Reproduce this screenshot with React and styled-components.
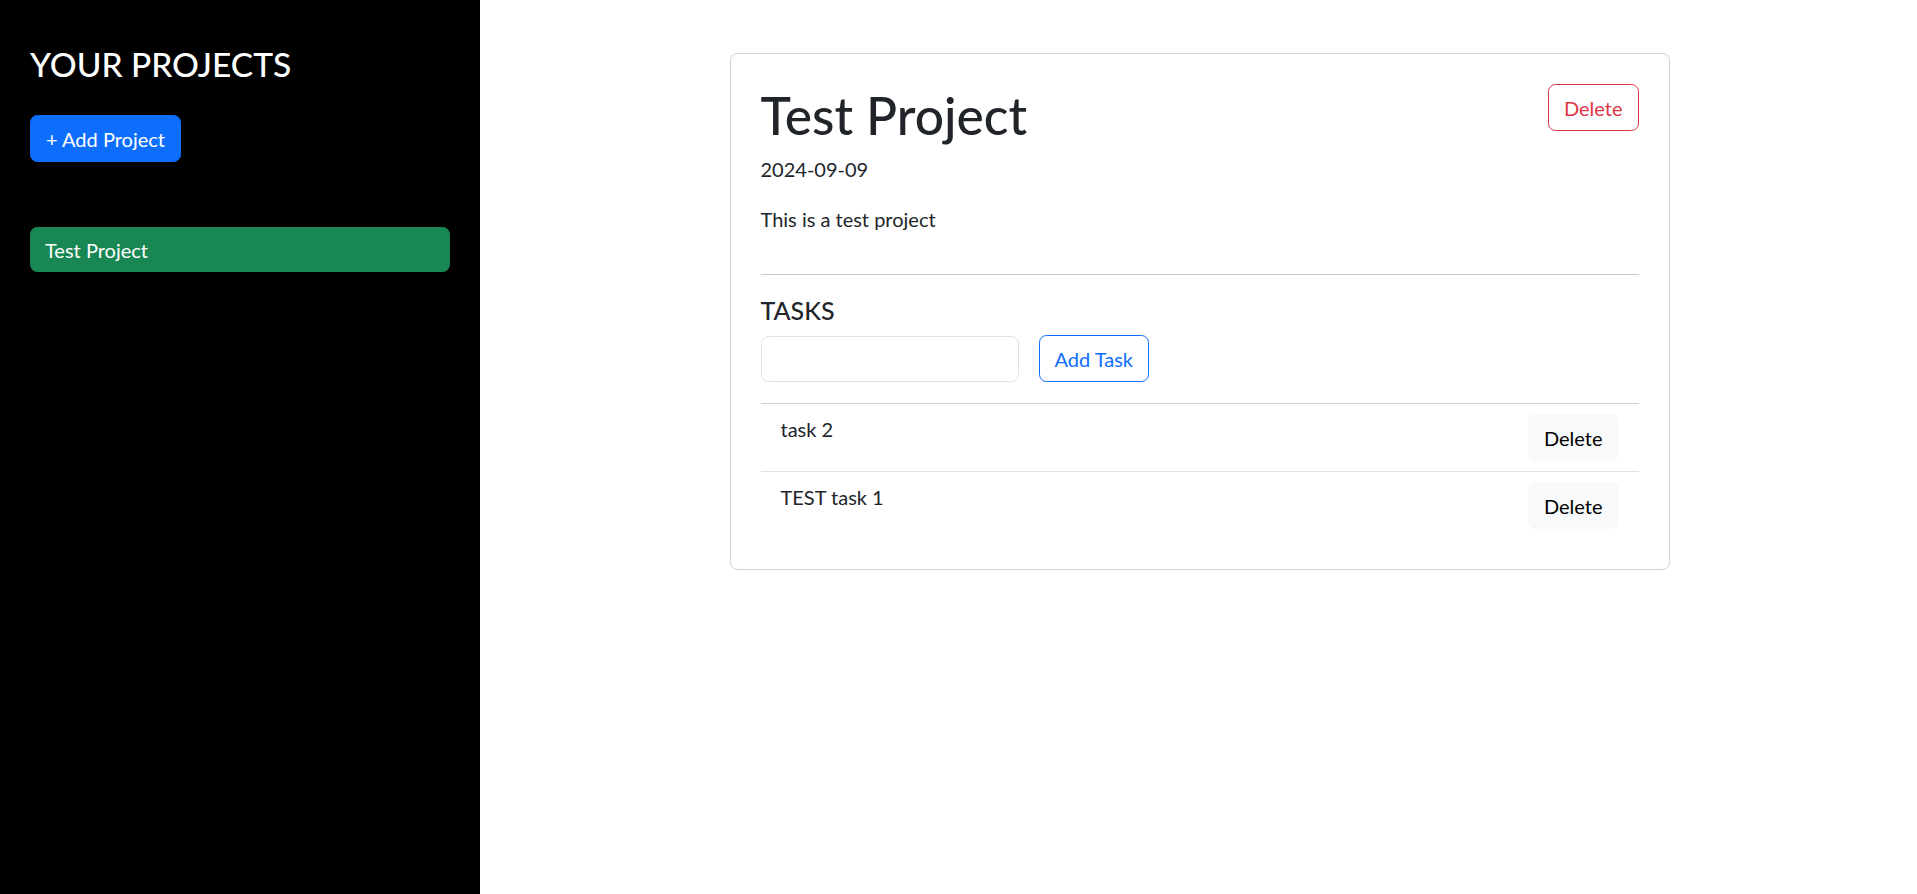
import React from 'react';
import styled, { createGlobalStyle } from 'styled-components';

const GlobalStyle = createGlobalStyle`
  * {
    box-sizing: border-box;
  }

  body {
    margin: 0;
    font-family: 'Segoe UI', Lato, 'Noto Sans', sans-serif;
    font-size: 20px;
    line-height: 30px;
    color: #212529;
    background: #fff;
  }
`;

const tasks = [
  { id: 2, text: 'task 2' },
  { id: 1, text: 'TEST task 1' },
];

const App = () => {
  return (
    <Layout>
      <GlobalStyle />
      <Sidebar>
        <SidebarTitle>YOUR PROJECTS</SidebarTitle>
        <Button $variant="primary">+ Add Project</Button>
        <ProjectList>
          <ProjectItem $active>Test Project</ProjectItem>
        </ProjectList>
      </Sidebar>

      <Main>
        <Card>
          <CardHeader>
            <ProjectTitle>Test Project</ProjectTitle>
            <Button $variant="outlineDanger">Delete</Button>
          </CardHeader>
          <Text>2024-09-09</Text>
          <Text>This is a test project</Text>
          <Divider />
          <SectionTitle>TASKS</SectionTitle>
          <TaskForm>
            <TaskInput type="text" />
            <Button $variant="outlinePrimary">Add Task</Button>
          </TaskForm>
          <TaskList>
            {tasks.map(task => (
              <TaskRow key={task.id}>
                <span>{task.text}</span>
                <Button $variant="light">Delete</Button>
              </TaskRow>
            ))}
          </TaskList>
        </Card>
      </Main>
    </Layout>
  );
};

const variants = {
  primary: { bg: '#0d6efd', border: '#0d6efd', color: '#fff' },
  outlineDanger: { bg: 'transparent', border: '#dc3545', color: '#dc3545' },
  outlinePrimary: { bg: 'transparent', border: '#0d6efd', color: '#0d6efd' },
  light: { bg: '#f8f9fa', border: '#f8f9fa', color: '#000' },
};

const Layout = styled.div`
  display: flex;
  min-height: 100vh;
`;

const Sidebar = styled.aside`
  flex: 0 0 480px;
  padding: 43px 30px 30px;
  background: #000;
  color: #fff;
`;

const SidebarTitle = styled.h3`
  margin: 0 0 30px;
  font-size: 33.5px;
  font-weight: 500;
  line-height: 42px;
`;

const Button = styled.button`
  display: inline-block;
  flex: none;
  padding: 7.5px 15px;
  border: 1px solid ${props => variants[props.$variant].border};
  border-radius: 7.5px;
  background: ${props => variants[props.$variant].bg};
  color: ${props => variants[props.$variant].color};
  font-family: inherit;
  font-size: 20px;
  line-height: 30px;
  white-space: nowrap;
  cursor: pointer;
`;

const ProjectList = styled.ul`
  margin: 65px 0 0;
  padding: 0;
  list-style: none;
`;

const ProjectItem = styled.li`
  padding: 7.5px 15px;
  border-radius: 7.5px;
  background: ${props => (props.$active ? '#198754' : 'transparent')};
  color: #fff;
  font-size: 20px;
  line-height: 30px;
`;

const Main = styled.main`
  flex: 1;
  padding: 53px 0 0 2px;
`;

const Card = styled.section`
  display: flex;
  flex-direction: column;
  width: 940px;
  margin: 0 auto;
  padding: 30px;
  border: 1px solid #d3d3d3;
  border-radius: 7.5px;
`;

const CardHeader = styled.div`
  display: flex;
  justify-content: space-between;
  align-items: flex-start;
`;

const ProjectTitle = styled.h1`
  margin: -1px 0 7px;
  font-size: 51.5px;
  font-weight: 500;
  line-height: 64px;
`;

const Text = styled.p`
  margin: 0 0 20px;
`;

const Divider = styled.hr`
  width: 100%;
  margin: 20px 0;
  border: 0;
  border-top: 1px solid #cbcbcb;
`;

const SectionTitle = styled.h5`
  margin: 0 0 10px;
  font-size: 25px;
  font-weight: 500;
  line-height: 30px;
`;

const TaskForm = styled.div`
  display: flex;
  align-items: center;
  gap: 20px;
`;

const TaskInput = styled.input`
  width: 258px;
  height: 46px;
  padding: 7.5px 15px;
  border: 1px solid #dee2e6;
  border-radius: 7.5px;
  font-family: inherit;
  font-size: 20px;
`;

const TaskList = styled.ul`
  margin: 21px 0 0;
  padding: 0;
  list-style: none;
  border-top: 1px solid #cfcfcf;
`;

const TaskRow = styled.li`
  display: flex;
  justify-content: space-between;
  align-items: flex-start;
  padding: 10px 20px;
  border-bottom: 1px solid #dee2e6;

  &:last-child {
    border-bottom: 0;
  }
`;

export default App;
